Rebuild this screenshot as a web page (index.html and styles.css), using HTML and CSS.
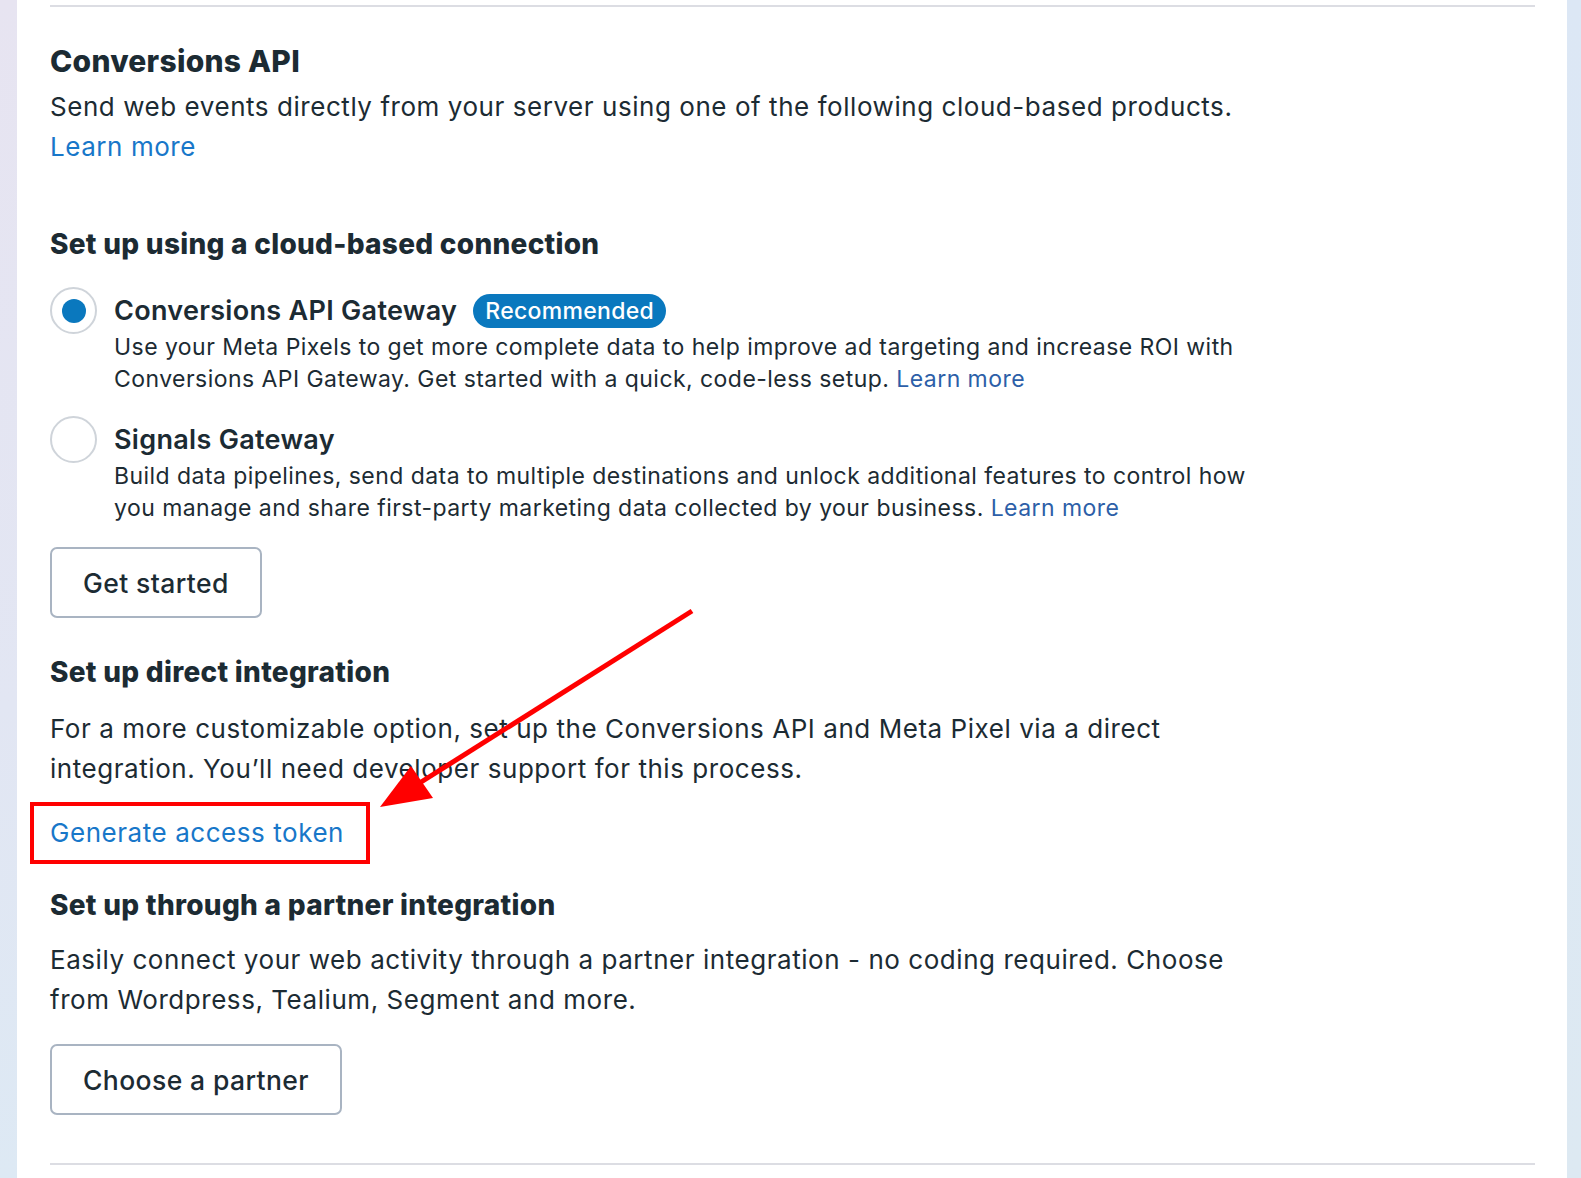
FILE: index.html
```html
<!DOCTYPE html>
<html lang="en">
<head>
<meta charset="utf-8">
<title>Conversions API</title>
<link rel="stylesheet" href="styles.css">
</head>
<body>
<div class="page">
  <div class="edge edge-left"></div>
  <main class="panel">
    <div class="rule rule-top"></div>

    <h1 class="title">Conversions API</h1>
    <p class="lead">Send web events directly from your server using one of the following cloud-based products.<br><a class="link" href="#">Learn more</a></p>

    <h2 class="section-title section-cloud">Set up using a cloud-based connection</h2>

    <div class="options">
      <div class="option">
        <span class="radio radio-on"><span class="radio-dot"></span></span>
        <div class="option-body">
          <div class="option-head">
            <span class="option-title">Conversions API Gateway</span>
            <span class="badge">Recommended</span>
          </div>
          <p class="option-desc">Use your Meta Pixels to get more complete data to help improve ad targeting and increase ROI with Conversions API Gateway. Get started with a quick, code-less setup. <a class="link-dark" href="#">Learn more</a></p>
        </div>
      </div>
      <div class="option option-second">
        <span class="radio"></span>
        <div class="option-body">
          <div class="option-head">
            <span class="option-title">Signals Gateway</span>
          </div>
          <p class="option-desc">Build data pipelines, send data to multiple destinations and unlock additional features to control how you manage and share first-party marketing data collected by your business. <a class="link-dark" href="#">Learn more</a></p>
        </div>
      </div>
    </div>

    <button class="btn btn-start" type="button">Get started</button>

    <h2 class="section-title section-direct">Set up direct integration</h2>
    <p class="body-text body-direct">For a more customizable option, set up the Conversions API and Meta Pixel via a direct integration. You’ll need developer support for this process.</p>
    <div class="highlight"><a class="link" href="#">Generate access token</a></div>

    <h2 class="section-title section-partner">Set up through a partner integration</h2>
    <p class="body-text">Easily connect your web activity through a partner integration - no coding required. Choose from Wordpress, Tealium, Segment and more.</p>

    <button class="btn btn-partner" type="button">Choose a partner</button>

    <div class="rule rule-bottom"></div>
  </main>
  <div class="edge edge-right"></div>

  <svg class="arrow" width="1581" height="1178" viewBox="0 0 1581 1178" aria-hidden="true">
    <line x1="692" y1="611" x2="418" y2="784" stroke="#ff0000" stroke-width="5" stroke-linecap="butt"/>
    <polygon points="380,807 411,766 433,798" fill="#ff0000"/>
  </svg>
</div>
</body>
</html>
```

FILE: styles.css
```css
* { box-sizing: border-box; }

html, body {
  margin: 0;
  padding: 0;
  background: #ffffff;
}

body {
  font-family: "Inter", "Liberation Sans", sans-serif;
  color: #1c2b33;
}

.page {
  position: relative;
  display: flex;
  width: 1581px;
  min-height: 1178px;
  overflow: hidden;
}

.edge-left {
  width: 17px;
  flex: none;
  background: linear-gradient(180deg, #e7e4f1 0%, #e2e6f3 60%, #dde9f4 100%);
}

.edge-right {
  width: 14px;
  flex: none;
  background: linear-gradient(180deg, #dce7f5 0%, #dde9f2 100%);
}

.panel {
  flex: 1;
  padding: 5px 32px 0 33px;
  background: #ffffff;
}

.rule {
  height: 2px;
  background: #dcdde3;
}

.title {
  margin: 36px 0 0;
  font-size: 30px;
  line-height: 36px;
  font-weight: 800;
  letter-spacing: 0.25px;
}

.lead {
  margin: 8px 0 0;
  max-width: 1210px;
  font-size: 26px;
  line-height: 40px;
  font-weight: 400;
  letter-spacing: 0.55px;
}

.link {
  color: #1877c9;
  text-decoration: none;
}

.link-dark {
  color: #2d5fa8;
  text-decoration: none;
}

.section-title {
  margin: 0;
  font-size: 28px;
  line-height: 34px;
  font-weight: 800;
  letter-spacing: 0.28px;
}

.section-cloud { margin-top: 60px; }
.section-direct { margin-top: 37px; }
.section-partner { margin-top: 24px; }

.options {
  margin-top: 32px;
  display: flex;
  flex-direction: column;
  gap: 27px;
}

.option {
  display: flex;
  gap: 17px;
  align-items: flex-start;
}

.radio {
  flex: none;
  width: 47px;
  height: 47px;
  border-radius: 50%;
  border: 2px solid #cfd4da;
  display: flex;
  align-items: center;
  justify-content: center;
  margin-top: -6px;
  background: #fff;
}

.radio-dot {
  width: 24px;
  height: 24px;
  border-radius: 50%;
  background: #0a78be;
}

.option-body {
  max-width: 1146px;
}

.option-head {
  display: flex;
  align-items: center;
  gap: 16px;
  height: 36px;
}

.option-title {
  font-size: 27px;
  line-height: 36px;
  font-weight: 600;
  letter-spacing: 0.3px;
}

.badge {
  display: inline-flex;
  align-items: center;
  height: 34px;
  padding: 0 12px;
  border-radius: 17px;
  background: #0a78be;
  color: #ffffff;
  font-size: 23px;
  font-weight: 500;
  letter-spacing: 0.3px;
}

.option-desc {
  margin: 2px 0 0;
  font-size: 23px;
  line-height: 32px;
  font-weight: 400;
  letter-spacing: 0.45px;
}

.btn {
  display: block;
  height: 71px;
  padding: 0 31px;
  background: #ffffff;
  border: 2px solid #a9b4c2;
  border-radius: 7px;
  color: #1c2b33;
  font-family: "Inter", "Liberation Sans", sans-serif;
  font-size: 26.5px;
  font-weight: 500;
  letter-spacing: 0.4px;
}

.btn-start { margin-top: 23px; }
.btn-partner { margin-top: 24px; }

.body-text {
  margin: 18px 0 0;
  max-width: 1210px;
  font-size: 26px;
  line-height: 40px;
  font-weight: 400;
  letter-spacing: 0.55px;
}

.body-direct { margin-top: 20px; }

.highlight {
  display: inline-block;
  margin: 13px 0 0 -20px;
  padding: 7px 22px 7px 16px;
  border: 4px solid #ff0000;
  font-size: 26px;
  line-height: 40px;
  letter-spacing: 0.55px;
}

.rule-bottom { margin-top: 48px; }

.arrow {
  position: absolute;
  left: 0;
  top: 0;
  pointer-events: none;
}
```
